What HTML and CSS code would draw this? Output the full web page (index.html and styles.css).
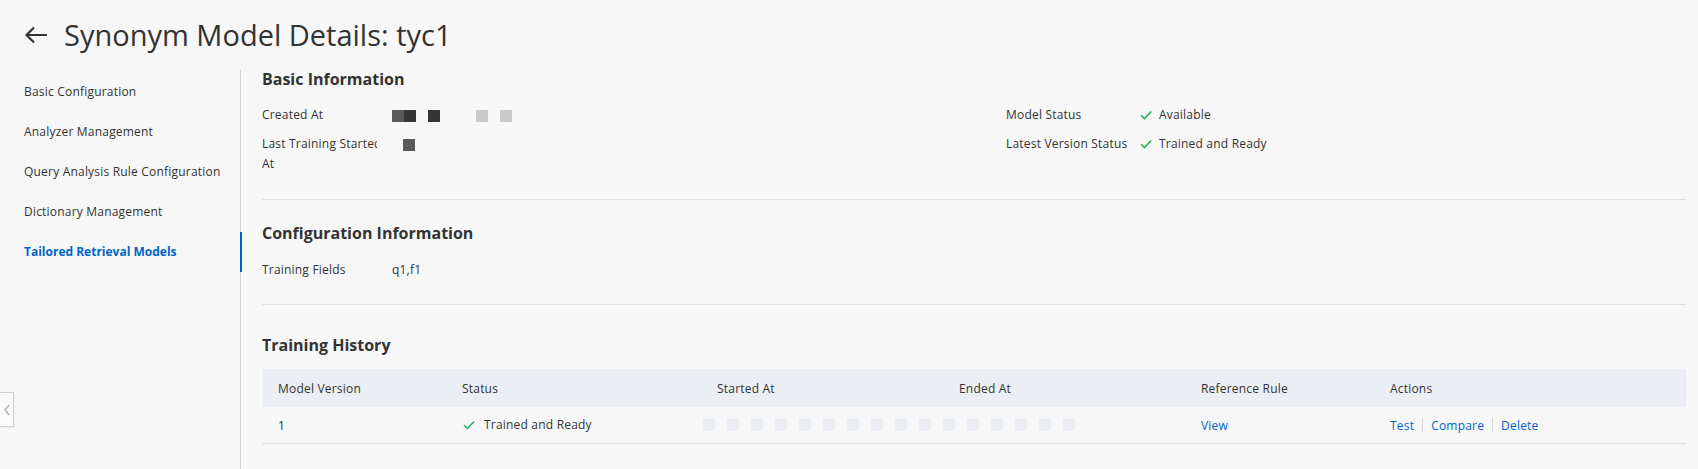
FILE: index.html
```html
<!DOCTYPE html>
<html lang="en">
<head>
<meta charset="utf-8">
<title>Synonym Model Details</title>
<link rel="stylesheet" href="styles.css">
</head>
<body>
<header class="page-header">
  <svg class="back-icon" width="24" height="18" viewBox="0 0 24 18"><path d="M23 9H2.5M10 1.5L2.5 9l7.5 7.5" fill="none" stroke="#333" stroke-width="2.2"/></svg>
  <h1 class="page-title">Synonym Model Details: tyc1</h1>
</header>
<div class="layout">
  <nav class="sidebar">
    <div class="nav-item">Basic Configuration</div>
    <div class="nav-item">Analyzer Management</div>
    <div class="nav-item">Query Analysis Rule Configuration</div>
    <div class="nav-item">Dictionary Management</div>
    <div class="nav-item active">Tailored Retrieval Models</div>
  </nav>
  <main class="content">
    <section class="section section-basic">
      <h2 class="section-title">Basic Information</h2>
      <div class="kv-grid">
        <div class="kv-col">
          <div class="kv-row">
            <div class="kv-label"><span class="kv-label-text">Created At</span></div>
            <div class="kv-value">
              <span class="redact">
                <i class="px px-mid"></i><i class="px px-dark"></i><i class="px px-gap"></i><i class="px px-dark"></i><i class="px px-gap3"></i><i class="px px-light"></i><i class="px px-gap"></i><i class="px px-light"></i>
              </span>
            </div>
          </div>
          <div class="kv-row">
            <div class="kv-label"><span class="kv-label-text">Last Training Started At</span></div>
            <div class="kv-value kv-value-top">
              <span class="redact"><i class="px px-gap11"></i><i class="px px-mid"></i></span>
            </div>
          </div>
        </div>
        <div class="kv-col">
          <div class="kv-row">
            <div class="kv-label kv-label-wide">Model Status</div>
            <div class="kv-value status">
              <svg class="check" width="12" height="10" viewBox="0 0 12 10"><path d="M1 5.2l3.4 3.3L11.2 1.5" fill="none" stroke="#22b35e" stroke-width="1.6"/></svg>
              Available
            </div>
          </div>
          <div class="kv-row">
            <div class="kv-label kv-label-wide">Latest Version Status</div>
            <div class="kv-value status">
              <svg class="check" width="12" height="10" viewBox="0 0 12 10"><path d="M1 5.2l3.4 3.3L11.2 1.5" fill="none" stroke="#22b35e" stroke-width="1.6"/></svg>
              Trained and Ready
            </div>
          </div>
        </div>
      </div>
    </section>

    <section class="section section-config">
      <h2 class="section-title">Configuration Information</h2>
      <div class="kv-row kv-row-config">
        <div class="kv-label"><span class="kv-label-text">Training Fields</span></div>
        <div class="kv-value">q1,f1</div>
      </div>
    </section>

    <section class="section section-history">
      <h2 class="section-title">Training History</h2>
      <table class="table">
        <colgroup>
          <col class="c1"><col class="c2"><col class="c3"><col class="c4"><col class="c5"><col class="c6">
        </colgroup>
        <thead>
          <tr>
            <th>Model Version</th>
            <th>Status</th>
            <th>Started At</th>
            <th>Ended At</th>
            <th>Reference Rule</th>
            <th>Actions</th>
          </tr>
        </thead>
        <tbody>
          <tr>
            <td>1</td>
            <td>
              <span class="status">
                <svg class="check small" width="12" height="10" viewBox="0 0 12 10"><path d="M1 5.2l3.4 3.3L11.2 1.5" fill="none" stroke="#22b35e" stroke-width="1.5"/></svg>
                Trained and Ready
              </span>
            </td>
            <td class="cell-redact">
              <span class="redact redact-row">
                <i class="px px-pale"></i><i class="px px-pale"></i><i class="px px-pale"></i><i class="px px-pale"></i><i class="px px-pale"></i><i class="px px-pale"></i><i class="px px-pale"></i><i class="px px-pale"></i><i class="px px-pale"></i><i class="px px-pale"></i><i class="px px-pale"></i><i class="px px-pale"></i><i class="px px-pale"></i><i class="px px-pale"></i><i class="px px-pale"></i><i class="px px-pale"></i>
              </span>
            </td>
            <td></td>
            <td><a class="link">View</a></td>
            <td>
              <span class="actions">
                <a class="link">Test</a><span class="sep"></span><a class="link">Compare</a><span class="sep"></span><a class="link">Delete</a>
              </span>
            </td>
          </tr>
        </tbody>
      </table>
    </section>
  </main>
</div>
<div class="collapse-tab">
  <svg width="6" height="12" viewBox="0 0 6 12"><path d="M5 1L1 6l4 5" fill="none" stroke="#b0b0b0" stroke-width="1.3"/></svg>
</div>
</body>
</html>
```

FILE: styles.css
```css
* { box-sizing: border-box; }

html, body {
  margin: 0;
  padding: 0;
}

body {
  background: #f7f7f7;
  color: #333;
  font-family: "Open Sans", "Noto Sans", "Liberation Sans", sans-serif;
  font-size: 12px;
  letter-spacing: 0.2px;
  position: relative;
  min-height: 469px;
}

.page-header {
  height: 70px;
  display: flex;
  align-items: center;
  padding-left: 24px;
}

.back-icon {
  display: block;
  margin-right: 16px;
}

.page-title {
  margin: 0;
  font-size: 29px;
  font-weight: 400;
  letter-spacing: 0;
  color: #333;
  line-height: 36px;
}

.layout {
  display: flex;
  min-height: calc(469px - 70px);
}

.sidebar {
  width: 241px;
  flex: none;
  border-right: 1px solid #d3d3d3;
  padding-top: 2px;
}

.nav-item {
  position: relative;
  height: 40px;
  line-height: 40px;
  padding-left: 24px;
  color: #333;
  white-space: nowrap;
}

.nav-item.active {
  color: #0064c8;
  font-weight: 700;
  letter-spacing: 0;
}

.nav-item.active::after {
  content: "";
  position: absolute;
  right: -2px;
  top: 0;
  bottom: 0;
  width: 2px;
  background: #0064c8;
}

.content {
  flex: 1;
  padding: 0 12px 0 21px;
}

.section-title {
  margin: 0;
  font-size: 16px;
  font-weight: 700;
  line-height: 18px;
  letter-spacing: 0;
  color: #333;
}

.section-basic {
  padding-bottom: 25px;
  border-bottom: 1px solid #e2e2e2;
}

.kv-grid {
  display: grid;
  grid-template-columns: 744px 1fr;
  margin-top: 17px;
}

.kv-col {
  display: flex;
  flex-direction: column;
  gap: 9px;
}

.kv-row {
  display: flex;
  line-height: 20px;
}

.kv-label {
  width: 115px;
  margin-right: 15px;
  overflow: hidden;
  flex: none;
}

.kv-label-text {
  display: block;
  width: 127px;
}

.kv-label-wide {
  width: 133px;
  margin-right: 0;
}

.kv-value {
  display: flex;
  align-items: center;
}

.kv-value-top {
  align-items: flex-start;
}

.status {
  display: inline-flex;
  align-items: center;
}

.check {
  display: block;
  margin-right: 7px;
  margin-left: 1px;
}

.check.small {
  margin-left: 1px;
  margin-right: 9px;
}

.redact {
  display: inline-flex;
  align-items: center;
  height: 20px;
}

.px {
  display: block;
  width: 12px;
  height: 12px;
  margin-top: 1px;
}

.px-mid { background: #5a5a5a; }
.px-dark { background: #353535; }
.px-light { background: #c9c9c9; }
.px-pale { background: #e9ecf1; margin-right: 12px; margin-top: 12px; }
.px-gap { background: transparent; }
.px-gap3 { background: transparent; width: 36px; }
.px-gap11 { background: transparent; width: 11px; }

.section-config {
  padding-top: 24px;
  padding-bottom: 24px;
  border-bottom: 1px solid #e2e2e2;
}

.kv-row-config {
  margin-top: 18px;
}

.section-history {
  padding-top: 31px;
}

.table {
  width: 100%;
  margin-top: 15px;
  border-collapse: collapse;
  table-layout: fixed;
}

.c1 { width: 184px; }
.c2 { width: 255px; }
.c3 { width: 242px; }
.c4 { width: 242px; }
.c5 { width: 189px; }
.c6 { width: auto; }

.table th {
  background: #ebeef2;
  height: 38px;
  padding: 0 16px;
  text-align: left;
  font-weight: 400;
  color: #333;
}

.table td {
  height: 36px;
  padding: 0 16px;
  border-bottom: 1px solid #e0e0e0;
  color: #333;
  vertical-align: middle;
  white-space: nowrap;
}

.cell-redact {
  overflow: visible;
}

.redact-row {
  margin-left: -14px;
  height: 36px;
  align-items: flex-start;
}

.link {
  color: #0064c8;
  cursor: pointer;
}

.actions {
  display: inline-flex;
  align-items: center;
}

.sep {
  display: block;
  width: 1px;
  height: 14px;
  background: #d6d6d6;
  margin: 0 8px;
}

.collapse-tab {
  position: absolute;
  left: 0;
  top: 392px;
  width: 14px;
  height: 35px;
  background: #fafafa;
  border: 1px solid #cfcfcf;
  border-left: none;
  box-shadow: 0 1px 2px rgba(0,0,0,0.06);
  display: flex;
  align-items: center;
  justify-content: center;
}
```
